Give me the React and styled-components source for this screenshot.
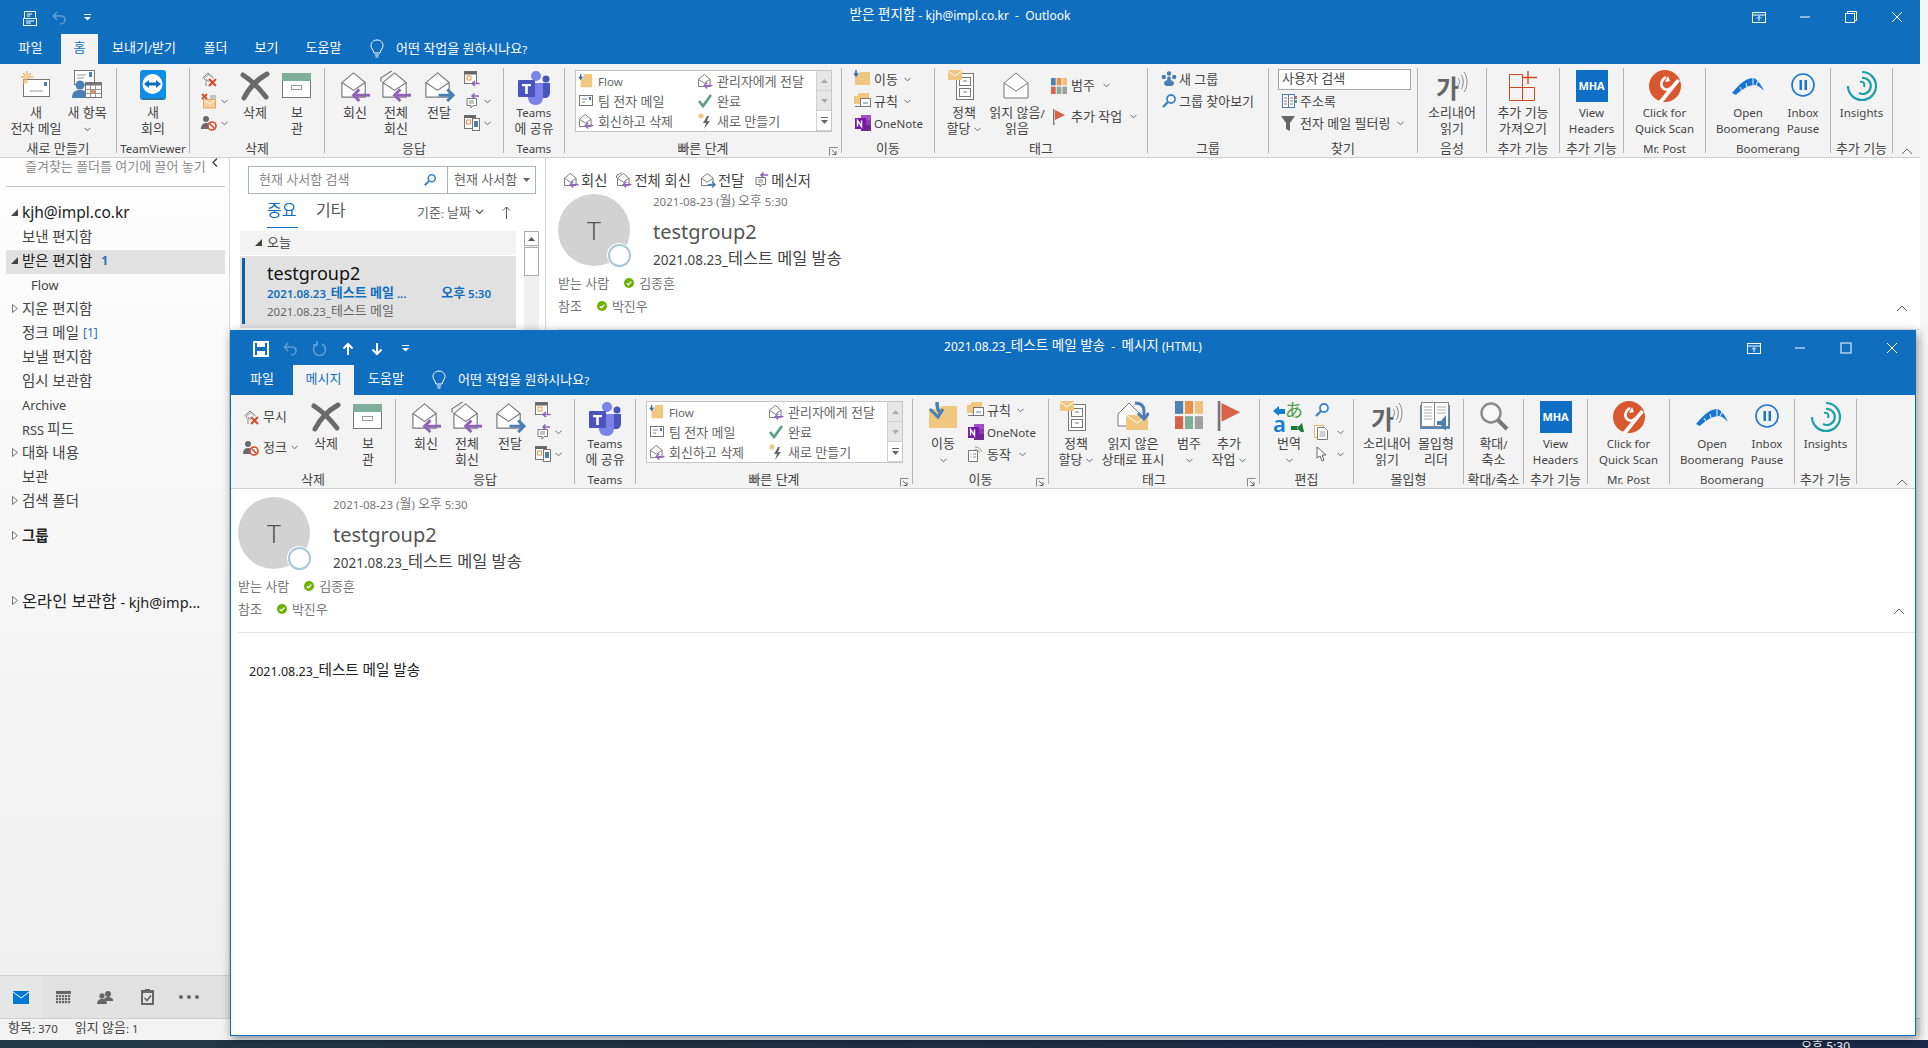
import React from 'react';
import styled, { createGlobalStyle } from 'styled-components';

const BLUE = '#106ebe';
const GLOBAL_FONT = '"Noto Sans", "Noto Sans CJK KR", sans-serif';

const Global = createGlobalStyle`
  html, body { margin: 0; padding: 0; background: #f5f5f5; }
  body { font-family: ${GLOBAL_FONT}; font-size: 11.5px; color: #444; overflow: hidden; }
  * { box-sizing: border-box; }
`;

/* Hangul runs are set a little larger than the Latin around them */
const Ko = styled.span`font-size: calc(1em * var(--ko, 1.13)); position: relative; top: -1px;`;
const HANGUL_RUN = /([\u3131-\uD7A3]+(?:\s+[\u3131-\uD7A3]+)*)/;
const T = ({ children }) => {
  if (typeof children !== 'string') return children ?? null;
  return children.split(HANGUL_RUN).map((part, i) => (i % 2 ? <Ko key={i}>{part}</Ko> : part));
};

const Screen = styled.div`
  position: relative; width: 1928px; height: 1048px; overflow: hidden;
  display: flex; flex-direction: column; background: #f6f6f6;
`;
const MainWindow = styled.div`
  width: 1920px; height: 1040px; display: flex; flex-direction: column; background: #fff; flex: none;
`;
const Taskbar = styled.div`
  flex: none; height: 8px; background: linear-gradient(90deg, #203a48, #1c2a48 80%);
  color: #fff; display: flex; justify-content: flex-end; padding-right: 78px; overflow: hidden;
  font-size: 12px; line-height: 14px;
`;
const Popup = styled.div`
  position: absolute; left: 230px; top: 330px; width: 1686px; height: 706px;
  border: 1px solid ${BLUE}; background: #fff; display: flex; flex-direction: column;
  box-shadow: 2px 3px 10px rgba(0,0,0,.45);
`;

/* title bar */
const TitleBar = styled.div`
  height: ${p => p.$h}px; flex: none; background: ${BLUE}; color: #fff;
  display: grid; grid-template-columns: 1fr auto 1fr; align-items: center;
`;
const Qat = styled.div`display: flex; padding-left: 15px; padding-top: 1px;`;
const QatBtn = styled.div`width: 29px; height: 20px; display: flex; align-items: center; justify-content: center; opacity: ${p => p.$dim ? .32 : 1};`;
const TitleText = styled.div`font-size: 12px; line-height: 16px; white-space: pre; padding-bottom: 3px;`;
const Controls = styled.div`display: flex; justify-content: flex-end;`;
const Ctl = styled.div`width: 46px; height: 28px; display: flex; align-items: center; justify-content: center;`;

/* tabs */
const TabBar = styled.div`height: 30px; flex: none; background: ${BLUE}; display: flex; color: #fff;`;
const Tab = styled.div`
  width: ${p => p.$w}px; text-align: center; line-height: 29px; font-size: 11.5px; white-space: nowrap;
  background: ${p => p.$active ? '#f3f3f3' : 'transparent'}; color: ${p => p.$active ? BLUE : '#fff'};
`;
const TellMe = styled.div`display: flex; align-items: center; margin-left: ${p => p.$ml}px; gap: 12px; font-size: 11.5px; padding-bottom: 1px; white-space: nowrap;`;

/* ribbon */
const RibbonBar = styled.div`
  height: 94px; flex: none; background: #f3f3f3; border-bottom: 1px solid #cfcfcf;
  padding-top: 4px; display: flex; position: relative;
`;
const GroupBox = styled.div`
  position: relative; flex: none; width: ${p => p.$w}px; height: 85px; border-right: 1px solid #b6b6b6;
`;
const GroupBody = styled.div`height: 69px; display: flex; padding-left: ${p => p.$pad || 0}px;`;
const GroupLabel = styled.div`margin-top: 4px; height: 16px; line-height: 16px; text-align: center; white-space: nowrap; color: #444;`;
const Launcher = styled.div`position: absolute; right: 3px; bottom: -3px; line-height: 0;`;
const Collapse = styled.div`position: absolute; right: ${p => p.$r}px; bottom: 2px; line-height: 0;`;

const BigBtn = styled.div`flex: none; width: ${p => p.$w}px; display: flex; flex-direction: column; align-items: center;`;
const BigIcon = styled.div`height: 37px; padding-top: 2px; display: flex; justify-content: center;`;
const BigLine = styled.div`height: 16px; line-height: 16px; white-space: nowrap; display: flex; align-items: center; gap: 4px; color: #444;`;

const SmallCol = styled.div`flex: none; width: ${p => p.$w}px; padding-left: ${p => p.$pad || 0}px; padding-top: ${p => p.$top || 0}px; display: flex; flex-direction: column;`;
const SmallRow = styled.div`height: ${p => p.$h || 22}px; display: flex; align-items: center; gap: ${p => p.$gap ?? 3}px; white-space: nowrap; color: #444;`;
const ChevWrap = styled.span`margin-left: ${p => p.$ml || 0}px; line-height: 0;`;

const SearchInput = styled.div`
  width: 133px; height: 21px; background: #fff; border: 1px solid #a6a6a6; line-height: 18px; padding-left: 3px;
  margin-left: -3px; color: #444; flex: none;
`;

const Gallery = styled.div`
  flex: none; margin-top: 2px; width: 257px; height: 62px; background: #fff; border: 1px solid #c6c6c6; display: flex;
`;
const GalleryGrid = styled.div`flex: 1; display: grid; grid-template-columns: 119px 1fr; grid-template-rows: repeat(3, 20px);`;
const GalleryItem = styled.div`display: flex; align-items: center; gap: 4px; padding-left: 2px; color: #666; white-space: nowrap;`;
const GalleryScroll = styled.div`flex: none; width: 15px; display: flex; flex-direction: column; border-left: 1px solid #d0d0d0;`;
const GalleryBtn = styled.div`flex: 1; background: ${p => p.$light ? '#fff' : '#e6e6e6'}; border-bottom: 1px solid #d0d0d0; display: flex; align-items: center; justify-content: center;`;

const MhaTile = styled.div`
  width: 32px; height: 32px; background: #0f6fc6; color: #fff; font-size: 11px; font-weight: 700; line-height: 32px; text-align: center; letter-spacing: -.2px;
`;

/* main content */
const Content = styled.div`flex: 1; display: flex; min-height: 0;`;
const Sidebar = styled.div`
  flex: none; width: 230px; border-right: 1px solid #d8d8d8; display: flex; flex-direction: column;
  background: linear-gradient(180deg, #fdfdfd, #efefef);
`;
const FavStrip = styled.div`
  flex: none; height: 29px; margin: 0 4px 0 6px; padding-left: 19px; border-bottom: 1px solid #c8c8c8; color: #8c8c8c;
  line-height: 18px; display: flex; justify-content: space-between; padding-right: 7px; white-space: nowrap;
`;
const FolderRow = styled.div`
  flex: none; height: ${p => p.$h || 24}px; margin: ${p => p.$mt || 0}px 4px 0 6px; padding-left: ${p => p.$indent || 0}px; padding-bottom: 3px; display: flex; align-items: center;
  font-size: ${p => p.$fs || 12.8}px; white-space: nowrap; color: ${p => p.$strong ? '#222' : '#444'}; font-weight: ${p => p.$bold ? 600 : 400};
  background: ${p => p.$sel ? '#e1e1e1' : 'transparent'};
`;
const CaretSlot = styled.span`flex: none; width: 16px; display: flex; justify-content: center; padding-left: 1px;`;
const Count = styled.span`color: #2f6fb5; font-weight: ${p => p.$bold ? 700 : 400}; margin-left: ${p => p.$ml}px; font-size: 12px;`;
const NavBar = styled.div`
  margin-top: auto; flex: none; height: 43px; background: #e1e1e1; border-top: 1px solid #cfcfcf; display: flex; align-items: center;
`;
const NavItem = styled.div`width: 42px; height: 42px; display: flex; align-items: center; justify-content: center; background: ${p => p.$active ? '#e6e6e6' : 'transparent'};`;
const StatusBar = styled.div`
  flex: none; height: 22px; background: #f3f3f3; border-top: 1px solid #cfcfcf; display: flex; gap: 17px; padding-left: 8px; line-height: 19px; color: #444;
`;

const ListPane = styled.div`flex: none; width: 316px; border-right: 1px solid #d8d8d8; display: flex; flex-direction: column;`;
const SearchBox = styled.div`
  flex: none; margin: 8px 0 0 18px; width: 288px; height: 28px; border: 1px solid #a9b3bd; display: flex; color: #777; line-height: 24px; background: #fff;
`;
const SearchField = styled.div`flex: 1; padding-left: 10px; display: flex; align-items: center; justify-content: space-between; padding-right: 10px; color: #888;`;
const SearchScope = styled.div`flex: none; width: 88px; border-left: 1px solid #a9b3bd; padding-left: 6px; display: flex; align-items: center; justify-content: space-between; padding-right: 5px; color: #666; white-space: nowrap;`;
const TabsRow = styled.div`flex: none; height: 34px; display: flex; padding-left: 37px; align-items: flex-start;`;
const FocusTab = styled.div`
  width: ${p => p.$w}px; height: 34px; line-height: 32px; font-size: 16px; color: ${p => p.$on ? BLUE : '#555'}; margin-right: ${p => p.$mr}px;
  border-bottom: ${p => p.$on ? `1px solid ${BLUE}` : 'none'}; white-space: nowrap;
`;
const SortBy = styled.div`margin-left: auto; margin-right: 34px; display: flex; align-items: center; height: 34px; gap: 4px; color: #666; white-space: nowrap; padding-top: 2px;`;
const SortArrow = styled.span`margin-left: 14px; line-height: 0;`;
const ListBody = styled.div`flex: 1; display: flex; padding: 3px 0 0 10px; min-height: 0;`;
const Items = styled.div`flex: none; width: 276px;`;
const GroupHead = styled.div`height: 24px; background: #f3f3f3; display: flex; align-items: center; padding-left: 15px; gap: 5px; color: #444; padding-bottom: 2px;`;
const MailItem = styled.div`
  margin-top: 1px; height: 72px; background: #e1e1e1; padding: 6px 0 0 27px; position: relative; display: flex; flex-direction: column;
  &::before { content: ''; position: absolute; left: 2px; top: 2px; bottom: 4px; width: 3px; background: #0f5ea8; }
`;
const ItemFrom = styled.div`font-size: 18px; line-height: 22px; color: #111;`;
const ItemSubject = styled.div`display: flex; line-height: 16px; margin-top: 1px; color: ${BLUE}; font-weight: 600; white-space: nowrap;`;
const ItemTime = styled.span`margin-left: auto; margin-right: 25px;`;
const ItemPreview = styled.div`color: #666; line-height: 16px; margin-top: 1px; white-space: nowrap;`;
const ScrollTrack = styled.div`flex: none; margin-left: 8px; width: 15px; background: #f0f0f0; display: flex; flex-direction: column;`;
const ScrollUp = styled.div`height: 15px; background: #fff; border: 1px solid #ababab; display: flex; align-items: center; justify-content: center;`;
const ScrollThumb = styled.div`height: 29px; background: #fff; border: 1px solid #ababab; margin-top: 1px;`;

const ReadingPane = styled.div`flex: 1; display: flex; flex-direction: column; padding-left: 12px; min-width: 0;`;
const Actions = styled.div`flex: none; height: 36px; padding: 8px 0 0 5px; display: flex; align-items: center; gap: 9px; font-size: 12.7px;`;
const Action = styled.div`display: flex; align-items: center; gap: 2px; color: #444; white-space: nowrap;`;

const HeaderTop = styled.div`display: flex; gap: 23px; height: 72px;`;
const Avatar = styled.div`
  position: relative; flex: none; width: 72px; height: 72px; border-radius: 50%; background: #d2d2d2; color: #555; font-size: 26px;
  font-weight: 300; display: flex; align-items: center; justify-content: center;
`;
const Presence = styled.div`
  position: absolute; right: -1px; bottom: -1px; width: 24px; height: 24px; border-radius: 50%; background: #fff; display: flex; align-items: center; justify-content: center;
  &::after { content: ''; width: 19px; height: 19px; border-radius: 50%; border: 2px solid #a9c6d4; }
`;
const HeaderText = styled.div`display: flex; flex-direction: column;`;
const DateLine = styled.div`line-height: 16px; margin-top: -1px; color: #777;`;
const FromLine = styled.div`font-size: 20px; line-height: 28px; margin-top: 8px; color: #555;`;
const SubjectLine = styled.div`--ko: 1.21; font-size: 13.5px; line-height: 20px; margin-top: 3px; color: #444; white-space: nowrap;`;
const PeopleWrap = styled.div`display: flex; justify-content: space-between; align-items: flex-end; padding-right: ${p => p.$pr}px;`;
const People = styled.div`display: flex; flex-direction: column;`;
const PersonRow = styled.div`display: flex; align-items: center; height: 16px; margin-top: ${p => p.$mt}px; color: #777; white-space: nowrap;`;
const PersonLabel = styled.span`margin-right: 15px;`;
const PersonName = styled.span`margin-left: 5px;`;
const HeaderRule = styled.div`height: 1px; background: #e3e3e3; margin-top: 15px;`;
const PopupBody = styled.div`flex: 1; padding: 8px 0 0 7px; min-height: 0;`;
const BodyText = styled.div`--ko: 1.17; padding: 29px 0 0 11px; line-height: 16px; color: #222; font-size: 12.5px;`;
const HeaderChev = styled.span`line-height: 0; margin-bottom: 2px;`;

/* ---------- drawings ---------- */
const Svg = styled.svg`display: block; flex: none;`;
const Ic = ({ s = 32, w, h, vb, children }) => (
  <Svg width={w || s} height={h || s} viewBox={vb || `0 0 ${w || s} ${h || s}`} fill="none">{children}</Svg>
);
const Chev = ({ c = '#666' }) => <Ic w={7} h={5}><path d="M.5 .8 3.5 3.8 6.5 .8" stroke={c} /></Ic>;
const ChevUp = () => <Ic w={12} h={7}><path d="M1 6 6 1l5 5" stroke="#666" /></Ic>;
const LauncherIcon = () => <Ic s={9}><path d="M.5 8.5V.5h8" stroke="#888" /><path d="M3 3l4 4M7 4v3.5H3.5" stroke="#666" /></Ic>;

const EnvPath = ({ sw = 1.2, back }) => (
  <g stroke="#777" strokeWidth={sw}>
    {back && <path d="M1 12V8L12 1" fill="none" />}
    <path d="M3 13 15 3l12 10v15H3z" fill="#fff" />
    <path d="M3 13l12 8 12-8" />
  </g>
);
const ArrowL = ({ c = '#8e63b8', sw = 3 }) => (
  <g stroke={c} strokeWidth={sw}><path d="M32 26H17" /><path d="M21 20l-6 6 6 6" /></g>
);
const ArrowR = ({ c = '#4a7fb5', sw = 3 }) => (
  <g stroke={c} strokeWidth={sw}><path d="M16 26h14" /><path d="M25 20l6 6-6 6" /></g>
);
const Reply = ({ s = 32, sw }) => <Ic s={s} vb="0 0 33 33"><EnvPath sw={sw} /><ArrowL /></Ic>;
const ReplyAll = ({ s = 32, sw }) => <Ic s={s} vb="0 0 33 33"><EnvPath sw={sw} back /><ArrowL /></Ic>;
const Forward = ({ s = 32, sw }) => <Ic s={s} vb="0 0 33 33"><EnvPath sw={sw} /><ArrowR /></Ic>;

const NewMail = () => (
  <Ic>
    <g stroke="#e8b56a" strokeWidth="1.4"><path d="M7 1v12M1 7h12M3 3l8 8M11 3l-8 8" /></g>
    <circle cx="7" cy="7" r="2.4" fill="#f3cf8e" />
    <rect x="3.5" y="9.5" width="26" height="17" fill="#fff" stroke="#777" />
    <rect x="3.5" y="9.5" width="4" height="4" fill="#f3cf8e" />
    <path d="M10 21h13" stroke="#999" /><rect x="24" y="12" width="3" height="4" fill="#4a7fb5" />
  </Ic>
);
const NewItems = () => (
  <Ic>
    <rect x="3.5" y=".5" width="20" height="14" fill="#fff" stroke="#777" />
    <path d="M6 5h9M6 8h7" stroke="#999" /><rect x="18" y="2" width="3" height="5" fill="#4a7fb5" />
    <circle cx="9" cy="15" r="4.5" fill="#4a7fb5" /><path d="M1 28c0-6 3-8 8-8s8 2 8 8z" fill="#4a7fb5" />
    <rect x="14.5" y="12.5" width="16" height="15" fill="#fff" stroke="#777" />
    <rect x="14.5" y="12.5" width="16" height="3" fill="#777" />
    <path d="M14.5 19.5h16M14.5 23.5h16M19.5 15v12M24.5 15v12" stroke="#999" />
    <rect x="20" y="20" width="4" height="3" fill="#e8914a" />
  </Ic>
);
const TeamViewer = () => (
  <Ic>
    <rect x="3" y="0" width="26" height="30" rx="3" fill="#0e8ee9" />
    <path d="M7 30h19l3-2H4z" fill="#555" opacity=".5" />
    <circle cx="15.5" cy="14" r="10" fill="#fff" />
    <path d="M7 14l5-4v2.5h7V10l5 4-5 4v-2.5h-7V18z" fill="#0e6fc0" />
  </Ic>
);
const Ignore = () => (
  <Ic s={16}>
    <path d="M1.5 7 7 2l5.5 5" stroke="#777" /><path d="M3.5 9V7L8 3.5 12 7" stroke="#999" />
    <path d="M5 8.5V15M5 8.5l3 2" stroke="#888" />
    <path d="M8 8l7 7M15 8l-7 7" stroke="#d9482b" strokeWidth="2" />
  </Ic>
);
const CleanUp = () => (
  <Ic s={16}>
    <rect x="2.5" y="6.5" width="12" height="8.5" fill="#f2cf98" stroke="#e0a860" />
    <path d="M3 7l5.5 4L14 7" stroke="#fff" />
    <path d="M1 1l5 5M6 1 1 6" stroke="#d9482b" strokeWidth="1.8" />
    <path d="M9 3h6M9 5h6" stroke="#999" />
  </Ic>
);
const Junk = () => (
  <Ic s={16}>
    <circle cx="5" cy="4" r="3" fill="#6a6a6a" /><path d="M0 14c0-4 2-6 5-6s5 2 5 6z" fill="#6a6a6a" />
    <circle cx="11" cy="11" r="4" fill="#fff" stroke="#d9482b" strokeWidth="1.6" />
    <path d="M8.5 8.5l5 5" stroke="#d9482b" strokeWidth="1.6" />
  </Ic>
);
const DeleteX = () => (
  <Ic><path d="M4 5c8 5 16 13 23 22M28 4C19 9 10 18 5 28" stroke="#6a6a6a" strokeWidth="5" strokeLinecap="round" /></Ic>
);
const Archive = () => (
  <Ic>
    <rect x="1.5" y="8.5" width="28" height="19" fill="#fff" stroke="#777" />
    <rect x="1" y="3" width="29" height="8" fill="#7fae9b" />
    <rect x="10.5" y="15.5" width="10" height="4" fill="#fff" stroke="#999" />
  </Ic>
);
const Meeting = () => (
  <Ic s={16}>
    <rect x=".5" y=".5" width="12" height="12" fill="#fff" stroke="#777" /><rect x=".5" y=".5" width="12" height="3" fill="#666" />
    <rect x="3" y="5" width="4" height="4" fill="none" stroke="#e8914a" />
    <path d="M15.5 12.5H8M11 10l-3 2.5 3 2.5" stroke="#8e63b8" strokeWidth="1.6" />
  </Ic>
);
const Chat = ({ s = 16 }) => (
  <Ic s={s} vb="0 0 16 16">
    <path d="M1 4.5h9.5v7H7l-2 2.5v-2.5H1z" fill="#fff" stroke="#777" transform="translate(2 1)" />
    <path d="M5 8h5M5 10h5" stroke="#888" />
    <path d="M15 3H8M10.5 .5 8 3l2.5 2.5" stroke="#8e63b8" strokeWidth="1.5" />
  </Ic>
);
const MorePhone = () => (
  <Ic s={16}>
    <rect x=".5" y=".5" width="11" height="13" fill="#fff" stroke="#777" /><rect x=".5" y=".5" width="11" height="2.5" fill="#666" />
    <rect x="2.5" y="5" width="4" height="4" stroke="#e8914a" />
    <rect x="8.5" y="3.5" width="7" height="12" fill="#fff" stroke="#777" /><rect x="10" y="6" width="4" height="6" fill="#4a7fb5" />
  </Ic>
);
const Teams = () => (
  <Ic w={32} h={36}>
    <circle cx="18" cy="6" r="5" fill="#7b83eb" /><circle cx="28" cy="9" r="3.5" fill="#4b53bc" />
    <path d="M24 13h8v9c0 4-2 6-5 6h-3z" fill="#4b53bc" />
    <path d="M10 13h15v14c0 5-3 8-7.5 8S10 32 10 27z" fill="#7b83eb" />
    <rect x="0" y="10" width="17" height="17" rx="1" fill="#4b53bc" />
    <path d="M4 14h9v2.2H9.8V24H7.2v-7.8H4z" fill="#fff" />
  </Ic>
);
const FlowFolder = () => (
  <Ic s={16} vb="0 0 18 18">
    <path d="M3 7h2l2-6h9v15H3z" fill="#f0c77e" />
    <path d="M3 1v5M1 4l2 3 2-3" stroke="#2f6fb5" strokeWidth="1.4" />
  </Ic>
);
const TeamMail = () => (
  <Ic s={16}>
    <rect x="1.5" y="2.5" width="13" height="10" fill="#fff" stroke="#777" />
    <path d="M4 6h5M4 9h3" stroke="#888" /><rect x="11" y="4" width="2" height="3" fill="#4a7fb5" />
  </Ic>
);
const Check = () => <Ic s={16}><path d="M2 8l4 5 8-11" stroke="#5b9e83" strokeWidth="2.6" /></Ic>;
const Bolt = () => (
  <Ic s={16}>
    <path d="M4 0v6M1 3h6M2 1l4 4M6 1 2 5" stroke="#e8b56a" />
    <path d="M10 3 6 10h3l-2 6 6-8h-3l2-5z" fill="#666" />
  </Ic>
);
const FolderSmall = () => (
  <Ic s={18}>
    <path d="M1 5h3l2-3h10v13H1z" fill="#f0c77e" />
    <path d="M2 0v5M0 3l2 3 2-3" stroke="#2f6fb5" strokeWidth="1.5" />
  </Ic>
);
const Rules = () => (
  <Ic s={18}>
    <path d="M0 4h3l2-3h10v5H0z" fill="#f0c77e" /><rect x="0" y="6" width="9" height="6" fill="#f0c77e" />
    <rect x="6.5" y="6.5" width="10" height="8" fill="#fff" stroke="#777" /><path d="M9 11h5" stroke="#4a7fb5" />
    <path d="M1 14.5h5" stroke="#777" />
  </Ic>
);
const OneNote = () => (
  <Ic s={18}>
    <rect x="7" y="1" width="10" height="16" fill="#a34fc7" /><rect x="7" y="6" width="10" height="5" fill="#8b3aad" /><rect x="7" y="11" width="10" height="6" fill="#6b2a8c" />
    <rect x="1" y="4" width="11" height="11" fill="#7719aa" />
    <path d="M3.5 12.5v-6l4 6v-6" stroke="#fff" strokeWidth="1.4" />
  </Ic>
);
const ActionsIcon = () => (
  <Ic s={16}>
    <path d="M1.5 4.5h9v11h-9z" fill="#fff" stroke="#777" />
    <path d="M3.5 8h1M6 8h3M3.5 11h1M6 11h3" stroke="#888" />
    <path d="M8 1c3 0 6 2 7 5M8 3.5c2 0 4 1 4.5 3" stroke="#999" />
  </Ic>
);
const Cabinet = () => (
  <Ic>
    <rect x="8.5" y="3.5" width="17" height="26" fill="#fff" stroke="#777" />
    <rect x="11.5" y="7.5" width="11" height="8" stroke="#777" /><rect x="11.5" y="18.5" width="11" height="8" stroke="#777" />
    <path d="M15 11h4M15 22h4" stroke="#777" />
    <rect x="0" y="0" width="14" height="10" fill="#f0c77e" /><path d="M0 1l7 5 7-5" stroke="#fff" />
  </Ic>
);
const OpenEnv = () => (
  <Ic><path d="M3 13 15 3l12 10v15H3z" fill="#fff" stroke="#777" /><path d="M3 13l12 8 12-8" stroke="#777" /></Ic>
);
const ReadUnread = () => (
  <Ic>
    <path d="M1 13 12 2l11 11v12H1z" fill="#fff" stroke="#777" />
    <rect x="9" y="14" width="22" height="15" fill="#f0c77e" />
    <path d="M9 14l11 8 11-8" stroke="#fff" />
    <path d="M18 2c6 0 9 3 9 8v6" stroke="#4a7fb5" strokeWidth="3" /><path d="M21 12l6 6 5-6" stroke="#4a7fb5" strokeWidth="3" />
  </Ic>
);
const CatGrid = ({ s = 16 }) => (
  <Ic s={s} vb="0 0 24 24">
    <rect x="0" width="7" height="11" fill="#4e81b4" /><rect x="8.5" width="7" height="11" fill="#e8914a" /><rect x="17" width="7" height="11" fill="#eec27e" />
    <rect x="0" y="13" width="7" height="11" fill="#d9624a" /><rect x="8.5" y="13" width="7" height="11" fill="#7fae9b" /><rect x="17" y="13" width="7" height="11" fill="#a0a0a0" />
  </Ic>
);
const Flag = ({ s = 16 }) => (
  <Ic s={s} vb="0 0 16 16"><rect x="2" y="0" width="1.4" height="16" fill="#777" /><path d="M4 1l10 5-10 5z" fill="#d9624a" /></Ic>
);
const BigFolder = () => (
  <Ic>
    <path d="M2 8h10l3-3h15v22H2z" fill="#f0c77e" />
    <path d="M10 1c0 4 0 8 3 10" stroke="#4a7fb5" strokeWidth="3.5" /><path d="M3 8l8 8 5-8" stroke="#4a7fb5" strokeWidth="3" />
  </Ic>
);
const NewGroup = () => (
  <Ic s={16}>
    <circle cx="8" cy="2.5" r="2.2" fill="#4a7fb5" /><circle cx="2.8" cy="6" r="2.2" fill="#4a7fb5" /><circle cx="13.2" cy="6" r="2.2" fill="#4a7fb5" />
    <circle cx="8" cy="7.5" r="2" fill="#4a7fb5" /><path d="M3 13c0-3 2-4 5-4s5 1 5 4l-2 2H5z" fill="#4a7fb5" />
  </Ic>
);
const Mag = ({ s = 16, c = '#3f82c4' }) => (
  <Ic s={s} vb="0 0 16 16"><circle cx="10" cy="6" r="4" stroke={c} strokeWidth="1.8" fill="#fff" /><path d="M7 9l-5 5" stroke={c} strokeWidth="2.4" /></Ic>
);
const AddressBook = () => (
  <Ic s={16}>
    <rect x="1.5" y="1.5" width="12" height="13" fill="#fff" stroke="#4a7fb5" /><path d="M7.5 1.5v13M3 5h3M3 8h3M3 11h3M9 5h3M9 8h3M9 11h3" stroke="#777" />
    <rect x="14" y="3" width="2" height="3" fill="#d9624a" /><rect x="14" y="7" width="2" height="3" fill="#5b9e83" />
  </Ic>
);
const Funnel = () => <Ic s={16}><path d="M0 1h14L9 8v8l-4-2V8z" fill="#666" /></Ic>;
const ReadAloud = () => (
  <Ic>
    <text x="0" y="28" fontSize="25" fontWeight="700" fill="#666" fontFamily={GLOBAL_FONT}>가</text>
    <path d="M22 8c2 2 2 5 0 8M25 5c3 3 3 11 0 14M28 2c4 5 4 15 0 20" stroke="#888" />
  </Ic>
);
const AddIns = () => (
  <Ic>
    <path d="M2.5 6.5h13v26M2.5 6.5v26h25V19.5h-25" stroke="#cf4a22" transform="translate(0 -2)" />
    <path d="M21 1v13M15 7.5h15" stroke="#cf4a22" strokeWidth="1.4" />
  </Ic>
);
const MrPost = () => (
  <Ic>
    <circle cx="16" cy="16" r="16" fill="#d9572e" />
    <path d="M9 32 28 9l3 2L14 32z" fill="#fff" />
    <path d="M17 7c-5 3-6 8-3 11s7 1 9-1" stroke="#fff" strokeWidth="2.6" /><path d="M16 12l3-6 2 5z" fill="#fff" />
  </Ic>
);
const Boomerang = () => (
  <Ic>
    <g transform="translate(0 -3)">
      <path d="M0 26C8 16 15 11 21 11c3 0 8 6 11 13-3-3-6-6-9-6-6 0-13 4-19 10z" fill="#1976d2" />
      <path d="M8 20l2 4M14 16l1 4M21 11v7M26 14l-2 4" stroke="#f3f3f3" />
    </g>
  </Ic>
);
const Pause = () => (
  <Ic><circle cx="16" cy="15" r="11" stroke="#1976d2" strokeWidth="1.6" /><rect x="12.5" y="10" width="2.5" height="10" fill="#1976d2" /><rect x="17.5" y="10" width="2.5" height="10" fill="#1976d2" /></Ic>
);
const Insights = () => (
  <Ic>
    <path d="M16 2a14 14 0 1 1-14 14" stroke="#1d9fa8" strokeWidth="2.2" />
    <path d="M16 8a8 8 0 1 1-3 15" stroke="#1d9fa8" strokeWidth="2.2" />
    <path d="M14 12c4-1 5 2 4 5" stroke="#1d9fa8" strokeWidth="2" />
  </Ic>
);
const Translate = () => (
  <Ic>
    <text x="12" y="16" fontSize="18" fill="#4f9a4a" fontFamily={GLOBAL_FONT}>あ</text>
    <text x="0" y="31" fontSize="22" fontWeight="600" fill="#0f7fd0" fontFamily={GLOBAL_FONT}>a</text>
    <path d="M0 10l6-5v3h6v5H6v2z" fill="#0f7fd0" /><path d="M28 31l-4-4 5-5 2 9zM25 25h-7v4h7z" fill="#1d7a3d" />
  </Ic>
);
const CopyDoc = () => (
  <Ic s={16}>
    <rect x=".5" y="1.5" width="9" height="12" fill="#fff" stroke="#e8b56a" />
    <path d="M3.5 3.5h7l3 3v9h-10z" fill="#fff" stroke="#777" /><path d="M5.5 8h6M5.5 10h6M5.5 12h6" stroke="#999" />
  </Ic>
);
const Cursor = () => <Ic s={16}><path d="M3 1v11l3-2 2 5 2-1-2-5h4z" fill="#fff" stroke="#666" /></Ic>;
const Immersive = () => (
  <Ic>
    <path d="M0 4h30v24H0z" fill="#5b86b8" />
    <rect x="1.5" y="1.5" width="13" height="24" fill="#fff" stroke="#888" /><rect x="14.5" y="1.5" width="14" height="24" fill="#fff" stroke="#888" />
    <path d="M4 6h8M4 9h8M4 12h8M4 15h8M4 18h8M17 6h9M17 9h9M17 12h9" stroke="#aaa" />
    <path d="M17 20h4l5-6v16l-5-6h-4z" fill="#4a7fb5" />
    <path d="M28 17c2 2 2 7 0 9" stroke="#4a7fb5" />
  </Ic>
);
const Magnify = () => (
  <Ic><circle cx="13" cy="12" r="9.5" fill="#f8f8f8" stroke="#8a8a8a" strokeWidth="2.4" /><path d="M20 19l9 9" stroke="#777" strokeWidth="4" /></Ic>
);
const Bulb = () => (
  <Ic w={14} h={20}><path d="M7 1C3.5 1 1 3.5 1 6.5c0 3 2.5 4 3 7.5h6c.5-3.5 3-4.5 3-7.5C13 3.5 10.5 1 7 1z" stroke="#fff" /><path d="M5 16h4M5.5 18h3" stroke="#fff" /></Ic>
);
const SendRecv = () => (
  <Ic s={18}>
    <path d="M3.5 2.5h11v6M3.5 2.5V9" stroke="#fff" /><path d="M6 5h5M6 7h3" stroke="#fff" />
    <rect x="2.5" y="9.5" width="13" height="7" stroke="#fff" /><path d="M5 12h8M5 14h5" stroke="#fff" />
  </Ic>
);
const Undo = () => <Ic s={16}><path d="M3 6h7c3 0 4 2 4 4s-2 4-5 4" stroke="#fff" strokeWidth="1.6" /><path d="M6 2 2.5 6 6 10" stroke="#fff" strokeWidth="1.6" /></Ic>;
const Redo = () => <Ic s={16}><path d="M6 3a6 6 0 1 0 5 0" stroke="#fff" strokeWidth="1.6" /><path d="M6 0v4H2" stroke="#fff" strokeWidth="1.6" /></Ic>;
const QatMenu = () => <Ic w={7} h={7}><path d="M0 .5h7" stroke="#fff" /><path d="M0 3h7L3.5 6.5z" fill="#fff" /></Ic>;
const Save = () => (
  <Ic s={16}><path d="M1 1h14v14H1z" stroke="#fff" strokeWidth="2" /><rect x="4" y="1" width="8" height="5" fill="#fff" /><rect x="4" y="10" width="8" height="5" fill="#fff" /></Ic>
);
const Up = () => <Ic s={14}><path d="M7 13V2M2.5 6.5 7 2l4.5 4.5" stroke="#fff" strokeWidth="2" /></Ic>;
const Down = () => <Ic s={14}><path d="M7 1v11M2.5 7.5 7 12l4.5-4.5" stroke="#fff" strokeWidth="2" /></Ic>;
const DisplayOpt = () => <Ic s={14}><rect x=".5" y="2.5" width="13" height="10" stroke="#fff" /><path d="M.5 5h13" stroke="#fff" /><path d="M7 11V6.5M5 8.5l2-2 2 2" stroke="#fff" /></Ic>;
const Minimize = () => <Ic s={12}><path d="M1 6h10" stroke="#fff" /></Ic>;
const Restore = () => <Ic s={12}><rect x=".5" y="2.5" width="9" height="9" stroke="#fff" /><path d="M2.5 2.5v-2h9v9h-2" stroke="#fff" /></Ic>;
const Maximize = () => <Ic s={12}><rect x="1" y="1" width="10" height="10" stroke="#fff" /></Ic>;
const CloseX = () => <Ic s={12}><path d="M1 1l10 10M11 1 1 11" stroke="#fff" /></Ic>;
const CaretFilled = () => <Ic s={7}><path d="M7 0v7H0z" fill="#444" /></Ic>;
const CaretOpen = () => <Ic w={6} h={9}><path d="M.5 .5 5.5 4.5.5 8.5z" stroke="#777" /></Ic>;
const TriUp = () => <Ic w={7} h={4}><path d="M0 4h7L3.5 0z" fill="#aaa" /></Ic>;
const TriDown = ({ c = '#aaa' }) => <Ic w={7} h={4}><path d="M0 0h7L3.5 4z" fill={c} /></Ic>;
const TriMenu = () => <Ic w={7} h={7}><path d="M0 .5h7" stroke="#666" /><path d="M0 3h7L3.5 7z" fill="#666" /></Ic>;
const TriUpDark = () => <Ic w={7} h={4}><path d="M0 4h7L3.5 0z" fill="#555" /></Ic>;
const TickCircle = () => (
  <Ic s={10}><circle cx="5" cy="5" r="5" fill="#6fb000" /><path d="M2.8 5.2 4.4 6.8 7.4 3.6" stroke="#fff" strokeWidth="1.3" /></Ic>
);
const NavMail = () => <Ic w={16} h={13}><rect width="16" height="13" fill="#0078d4" /><path d="M0 1l8 6 8-6" stroke="#fff" /></Ic>;
const NavCal = () => (
  <Ic s={15}><rect y="1" width="15" height="3" fill="#666" />
    {[5, 8, 11].flatMap(y => [0, 3, 6, 9, 12].map(x => <rect key={`${x}-${y}`} x={x} y={y} width="2.2" height="2.2" fill="#666" />))}
  </Ic>
);
const NavPeople = () => (
  <Ic w={16} h={13}><circle cx="11" cy="3" r="3" fill="#666" /><path d="M7 9c0-2 2-3 4-3s5 1 5 3v1H7z" fill="#666" /><circle cx="5" cy="5" r="3" fill="#666" stroke="#e1e1e1" strokeWidth=".6" /><path d="M0 13c0-3 2-5 5-5s5 2 5 5z" fill="#666" /></Ic>
);
const NavTask = () => (
  <Ic w={13} h={16}><rect y="1" width="13" height="15" fill="#666" /><rect x="2" y="4" width="9" height="10" fill="#e1e1e1" /><path d="M4 0h5v3H4z" fill="#666" /><path d="M3.5 9 6 11.5l4-5" stroke="#555" strokeWidth="1.3" /></Ic>
);
const Dots = () => <Ic w={20} h={4}><circle cx="2" cy="2" r="2" fill="#666" /><circle cx="10" cy="2" r="2" fill="#666" /><circle cx="18" cy="2" r="2" fill="#666" /></Ic>;
const ChevSmallDark = () => <Ic w={9} h={6}><path d="M1 1l3.5 3.5L8 1" stroke="#555" strokeWidth="1.2" /></Ic>;
const UpArrowThin = () => <Ic w={9} h={13}><path d="M4.5 13V1M1 4.5l3.5-3.5L8 4.5" stroke="#555" /></Ic>;
const ChevLeft = () => <Ic w={6} h={9}><path d="M5 .5 1 4.5l4 4" stroke="#444" strokeWidth="1.4" /></Ic>;

/* ---------- ribbon parts ---------- */
const Group = ({ w, pad, label, launcher, children }) => (
  <GroupBox $w={w}>
    <GroupBody $pad={pad}>{children}</GroupBody>
    <GroupLabel><T>{label}</T></GroupLabel>
    {launcher && <Launcher><LauncherIcon /></Launcher>}
  </GroupBox>
);
const Big = ({ w, icon, lines, chev }) => (
  <BigBtn $w={w}>
    <BigIcon>{icon}</BigIcon>
    {lines.map((l, i) => (
      <BigLine key={i}><span><T>{l}</T></span>{chev === 'inline' && i === lines.length - 1 && <Chev />}</BigLine>
    ))}
    {chev === 'below' && <BigLine><Chev /></BigLine>}
  </BigBtn>
);
const Small = ({ icon, text, chev, h, gap, ml }) => (
  <SmallRow $h={h} $gap={gap}>
    {icon}{text && <span><T>{text}</T></span>}{chev && <ChevWrap $ml={ml}><Chev /></ChevWrap>}
  </SmallRow>
);
const ReplyGroup = () => (
  <Group w={179} pad={11} label="응답">
    <Big w={38} icon={<Reply />} lines={['회신']} />
    <Big w={44} icon={<ReplyAll />} lines={['전체', '회신']} />
    <Big w={42} icon={<Forward />} lines={['전달']} />
    <SmallCol $w={43} $pad={4}>
      <Small icon={<Meeting />} />
      <Small icon={<Chat />} chev gap={4} />
      <Small icon={<MorePhone />} chev gap={4} />
    </SmallCol>
  </Group>
);
const TeamsGroup = () => (
  <Group w={61} label="Teams"><Big w={60} icon={<Teams />} lines={['Teams', '에 공유']} /></Group>
);
const QuickItem = ({ icon, text }) => <GalleryItem>{icon}<span><T>{text}</T></span></GalleryItem>;
const QuickGroup = () => (
  <Group w={277} pad={10} label="빠른 단계" launcher>
    <Gallery>
      <GalleryGrid>
        <QuickItem icon={<FlowFolder />} text="Flow" />
        <QuickItem icon={<Reply s={16} sw={2} />} text="관리자에게 전달" />
        <QuickItem icon={<TeamMail />} text="팀 전자 메일" />
        <QuickItem icon={<Check />} text="완료" />
        <QuickItem icon={<Reply s={16} sw={2} />} text="회신하고 삭제" />
        <QuickItem icon={<Bolt />} text="새로 만들기" />
      </GalleryGrid>
      <GalleryScroll>
        <GalleryBtn><TriUp /></GalleryBtn>
        <GalleryBtn><TriDown /></GalleryBtn>
        <GalleryBtn $light><TriMenu /></GalleryBtn>
      </GalleryScroll>
    </Gallery>
  </Group>
);
const MhaGroup = ({ w }) => (
  <Group w={w} label="추가 기능"><Big w={w - 1} icon={<MhaTile>MHA</MhaTile>} lines={['View', 'Headers']} /></Group>
);
const PostGroup = () => (
  <Group w={82} label="Mr. Post"><Big w={81} icon={<MrPost />} lines={['Click for', 'Quick Scan']} /></Group>
);
const BoomGroup = () => (
  <Group w={125} label="Boomerang">
    <Big w={84} icon={<Boomerang />} lines={['Open', 'Boomerang']} />
    <Big w={26} icon={<Pause />} lines={['Inbox', 'Pause']} />
  </Group>
);
const InsightGroup = () => (
  <Group w={62} label="추가 기능"><Big w={61} icon={<Insights />} lines={['Insights']} /></Group>
);

const MainRibbon = () => (
  <RibbonBar>
    <Group w={117} pad={8} label="새로 만들기">
      <Big w={56} icon={<NewMail />} lines={['새', '전자 메일']} />
      <Big w={46} icon={<NewItems />} lines={['새 항목']} chev="below" />
    </Group>
    <Group w={73} label="TeamViewer"><Big w={72} icon={<TeamViewer />} lines={['새', '회의']} /></Group>
    <Group w={135} label="삭제">
      <SmallCol $w={47} $pad={11}>
        <Small icon={<Ignore />} />
        <Small icon={<CleanUp />} chev gap={4} />
        <Small icon={<Junk />} chev gap={4} />
      </SmallCol>
      <Big w={36} icon={<DeleteX />} lines={['삭제']} />
      <Big w={48} icon={<Archive />} lines={['보', '관']} />
    </Group>
    <ReplyGroup />
    <TeamsGroup />
    <QuickGroup />
    <Group w={93} label="이동">
      <SmallCol $w={92} $pad={12}>
        <Small icon={<FolderSmall />} text="이동" chev gap={2} ml={4} />
        <Small icon={<Rules />} text="규칙" chev gap={2} ml={4} />
        <Small icon={<OneNote />} text="OneNote" gap={2} />
      </SmallCol>
    </Group>
    <Group w={213} label="태그">
      <Big w={58} icon={<Cabinet />} lines={['정책', '할당']} chev="inline" />
      <Big w={48} icon={<OpenEnv />} lines={['읽지 않음/', '읽음']} />
      <SmallCol $w={106} $pad={10} $top={2}>
        <Small h={31} icon={<CatGrid />} text="범주" chev gap={4} ml={4} />
        <Small h={31} icon={<Flag />} text="추가 작업" chev gap={4} ml={4} />
      </SmallCol>
    </Group>
    <Group w={121} label="그룹">
      <SmallCol $w={120} $pad={13}>
        <Small icon={<NewGroup />} text="새 그룹" gap={2} />
        <Small icon={<Mag />} text="그룹 찾아보기" gap={2} />
      </SmallCol>
    </Group>
    <Group w={149} label="찾기">
      <SmallCol $w={148} $pad={12}>
        <SmallRow><SearchInput><T>사용자 검색</T></SearchInput></SmallRow>
        <Small icon={<AddressBook />} text="주소록" />
        <Small icon={<Funnel />} text="전자 메일 필터링" chev ml={4} />
      </SmallCol>
    </Group>
    <Group w={69} label="음성"><Big w={68} icon={<ReadAloud />} lines={['소리내어', '읽기']} /></Group>
    <Group w={73} label="추가 기능"><Big w={72} icon={<AddIns />} lines={['추가 기능', '가져오기']} /></Group>
    <MhaGroup w={64} />
    <PostGroup />
    <BoomGroup />
    <InsightGroup />
    <Collapse $r={7}><ChevUp /></Collapse>
  </RibbonBar>
);

const PopupRibbon = () => (
  <RibbonBar>
    <Group w={165} label="삭제">
      <SmallCol $w={77} $pad={12} $top={2}>
        <Small h={31} icon={<Ignore />} text="무시" gap={4} />
        <Small h={31} icon={<Junk />} text="정크" chev gap={4} ml={0} />
      </SmallCol>
      <Big w={36} icon={<DeleteX />} lines={['삭제']} />
      <Big w={48} icon={<Archive />} lines={['보', '관']} />
    </Group>
    <ReplyGroup />
    <TeamsGroup />
    <QuickGroup />
    <Group w={136} pad={8} label="이동" launcher>
      <Big w={44} icon={<BigFolder />} lines={['이동']} chev="below" />
      <SmallCol $w={84} $pad={2}>
        <Small icon={<Rules />} text="규칙" chev gap={2} ml={4} />
        <Small icon={<OneNote />} text="OneNote" gap={2} />
        <Small icon={<ActionsIcon />} text="동작" chev gap={4} ml={4} />
      </SmallCol>
    </Group>
    <Group w={211} label="태그" launcher>
      <Big w={54} icon={<Cabinet />} lines={['정책', '할당']} chev="inline" />
      <Big w={60} icon={<ReadUnread />} lines={['읽지 않은', '상태로 표시']} />
      <Big w={52} icon={<CatGrid s={28} />} lines={['범주']} chev="below" />
      <Big w={28} icon={<Flag s={30} />} lines={['추가', '작업']} chev="inline" />
    </Group>
    <Group w={94} pad={6} label="편집">
      <Big w={46} icon={<Translate />} lines={['번역']} chev="below" />
      <SmallCol $w={40} $pad={2}>
        <Small icon={<Mag />} />
        <Small icon={<CopyDoc />} chev gap={7} />
        <Small icon={<Cursor />} chev gap={7} />
      </SmallCol>
    </Group>
    <Group w={110} label="몰입형">
      <Big w={66} icon={<ReadAloud />} lines={['소리내어', '읽기']} />
      <Big w={32} icon={<Immersive />} lines={['몰입형', '리더']} />
    </Group>
    <Group w={60} label="확대/축소"><Big w={59} icon={<Magnify />} lines={['확대/', '축소']} /></Group>
    <MhaGroup w={64} />
    <PostGroup />
    <BoomGroup />
    <InsightGroup />
    <Collapse $r={7}><ChevUp /></Collapse>
  </RibbonBar>
);

const MessageHeader = ({ chevPad }) => (
  <>
    <HeaderTop>
      <Avatar>T<Presence /></Avatar>
      <HeaderText>
        <DateLine><T>2021-08-23 (월) 오후 5:30</T></DateLine>
        <FromLine>testgroup2</FromLine>
        <SubjectLine><T>2021.08.23_테스트 메일 발송</T></SubjectLine>
      </HeaderText>
    </HeaderTop>
    <PeopleWrap $pr={chevPad}>
      <People>
        <PersonRow $mt={9}><PersonLabel><T>받는 사람</T></PersonLabel><TickCircle /><PersonName><T>김종훈</T></PersonName></PersonRow>
        <PersonRow $mt={7}><PersonLabel><T>참조</T></PersonLabel><TickCircle /><PersonName><T>박진우</T></PersonName></PersonRow>
      </People>
      <HeaderChev><ChevUp /></HeaderChev>
    </PeopleWrap>
    <HeaderRule />
  </>
);

const FOLDERS = [
  { t: '보낸 편지함' },
  { t: '받은 편지함', caret: 'filled', sel: true, strong: true, bold: true, count: '1' },
  { t: 'Flow', indent: 9 },
  { t: '지운 편지함', caret: 'open' },
  { t: '정크 메일', tail: '[1]' },
  { t: '보낼 편지함' },
  { t: '임시 보관함' },
  { t: 'Archive' },
  { t: 'RSS 피드' },
  { t: '대화 내용', caret: 'open' },
  { t: '보관' },
  { t: '검색 폴더', caret: 'open' },
];

const Folder = ({ f }) => (
  <FolderRow $sel={f.sel} $strong={f.strong} $indent={f.indent}>
    <CaretSlot>{f.caret === 'filled' ? <CaretFilled /> : f.caret === 'open' ? <CaretOpen /> : null}</CaretSlot>
    <span><T>{f.t}</T></span>
    {f.count && <Count $bold $ml={9}>{f.count}</Count>}
    {f.tail && <Count $ml={4}>{f.tail}</Count>}
  </FolderRow>
);

export default function App() {
  return (
    <Screen>
      <Global />
      <MainWindow>
        <TitleBar $h={34}>
          <Qat>
            <QatBtn><SendRecv /></QatBtn>
            <QatBtn $dim><Undo /></QatBtn>
            <QatBtn><QatMenu /></QatBtn>
          </Qat>
          <TitleText><T>받은 편지함 - kjh@impl.co.kr  -  Outlook</T></TitleText>
          <Controls>
            <Ctl><DisplayOpt /></Ctl><Ctl><Minimize /></Ctl><Ctl><Restore /></Ctl><Ctl><CloseX /></Ctl>
          </Controls>
        </TitleBar>
        <TabBar>
          <Tab $w={61}><T>파일</T></Tab>
          <Tab $w={37} $active><T>홈</T></Tab>
          <Tab $w={92}><T>보내기/받기</T></Tab>
          <Tab $w={51}><T>폴더</T></Tab>
          <Tab $w={51}><T>보기</T></Tab>
          <Tab $w={63}><T>도움말</T></Tab>
          <TellMe $ml={15}><Bulb /><span><T>어떤 작업을 원하시나요?</T></span></TellMe>
        </TabBar>
        <MainRibbon />
        <Content>
          <Sidebar>
            <FavStrip><span><T>즐겨찾는 폴더를 여기에 끌어 놓기</T></span><ChevLeft /></FavStrip>
            <FolderRow $h={25} $mt={14} $fs={15.5} $strong>
              <CaretSlot><CaretFilled /></CaretSlot>kjh@impl.co.kr
            </FolderRow>
            {FOLDERS.map(f => <Folder key={f.t} f={f} />)}
            <FolderRow $mt={11} $strong $bold><CaretSlot><CaretOpen /></CaretSlot><span><T>그룹</T></span></FolderRow>
            <FolderRow $mt={41} $fs={14.5} $strong><CaretSlot><CaretOpen /></CaretSlot><span><T>온라인 보관함 - kjh@imp...</T></span></FolderRow>
            <NavBar>
              <NavItem $active><NavMail /></NavItem>
              <NavItem><NavCal /></NavItem>
              <NavItem><NavPeople /></NavItem>
              <NavItem><NavTask /></NavItem>
              <NavItem><Dots /></NavItem>
            </NavBar>
          </Sidebar>
          <ListPane>
            <SearchBox>
              <SearchField><span><T>현재 사서함 검색</T></span><Mag s={14} /></SearchField>
              <SearchScope><span><T>현재 사서함</T></span><TriDown c="#666" /></SearchScope>
            </SearchBox>
            <TabsRow>
              <FocusTab $w={31} $mr={18} $on>중요</FocusTab>
              <FocusTab $w={30} $mr={0}>기타</FocusTab>
              <SortBy><span><T>기준: 날짜</T></span><ChevSmallDark /><SortArrow><UpArrowThin /></SortArrow></SortBy>
            </TabsRow>
            <ListBody>
              <Items>
                <GroupHead><CaretFilled /><span><T>오늘</T></span></GroupHead>
                <MailItem>
                  <ItemFrom>testgroup2</ItemFrom>
                  <ItemSubject><span><T>2021.08.23_테스트 메일 ...</T></span><ItemTime><T>오후 5:30</T></ItemTime></ItemSubject>
                  <ItemPreview><T>2021.08.23_테스트 메일</T></ItemPreview>
                </MailItem>
              </Items>
              <ScrollTrack><ScrollUp><TriUpDark /></ScrollUp><ScrollThumb /></ScrollTrack>
            </ListBody>
          </ListPane>
          <ReadingPane>
            <Actions>
              <Action><Reply s={16} sw={2} /><span><T>회신</T></span></Action>
              <Action><ReplyAll s={16} sw={2} /><span><T>전체 회신</T></span></Action>
              <Action><Forward s={16} sw={2} /><span><T>전달</T></span></Action>
              <Action><Chat /><span><T>메신저</T></span></Action>
            </Actions>
            <MessageHeader chevPad={12} />
          </ReadingPane>
        </Content>
        <StatusBar><span><T>항목: 370</T></span><span><T>읽지 않음: 1</T></span></StatusBar>
      </MainWindow>
      <Taskbar>오후 5:30</Taskbar>

      <Popup>
        <TitleBar $h={34}>
          <Qat>
            <QatBtn><Save /></QatBtn>
            <QatBtn $dim><Undo /></QatBtn>
            <QatBtn $dim><Redo /></QatBtn>
            <QatBtn><Up /></QatBtn>
            <QatBtn><Down /></QatBtn>
            <QatBtn><QatMenu /></QatBtn>
          </Qat>
          <TitleText><T>2021.08.23_테스트 메일 발송  -  메시지 (HTML)</T></TitleText>
          <Controls>
            <Ctl><DisplayOpt /></Ctl><Ctl><Minimize /></Ctl><Ctl><Maximize /></Ctl><Ctl><CloseX /></Ctl>
          </Controls>
        </TitleBar>
        <TabBar>
          <Tab $w={62}><T>파일</T></Tab>
          <Tab $w={61} $active><T>메시지</T></Tab>
          <Tab $w={64}><T>도움말</T></Tab>
          <TellMe $ml={14}><Bulb /><span><T>어떤 작업을 원하시나요?</T></span></TellMe>
        </TabBar>
        <PopupRibbon />
        <PopupBody>
          <MessageHeader chevPad={10} />
          <BodyText><T>2021.08.23_테스트 메일 발송</T></BodyText>
        </PopupBody>
      </Popup>
    </Screen>
  );
}
